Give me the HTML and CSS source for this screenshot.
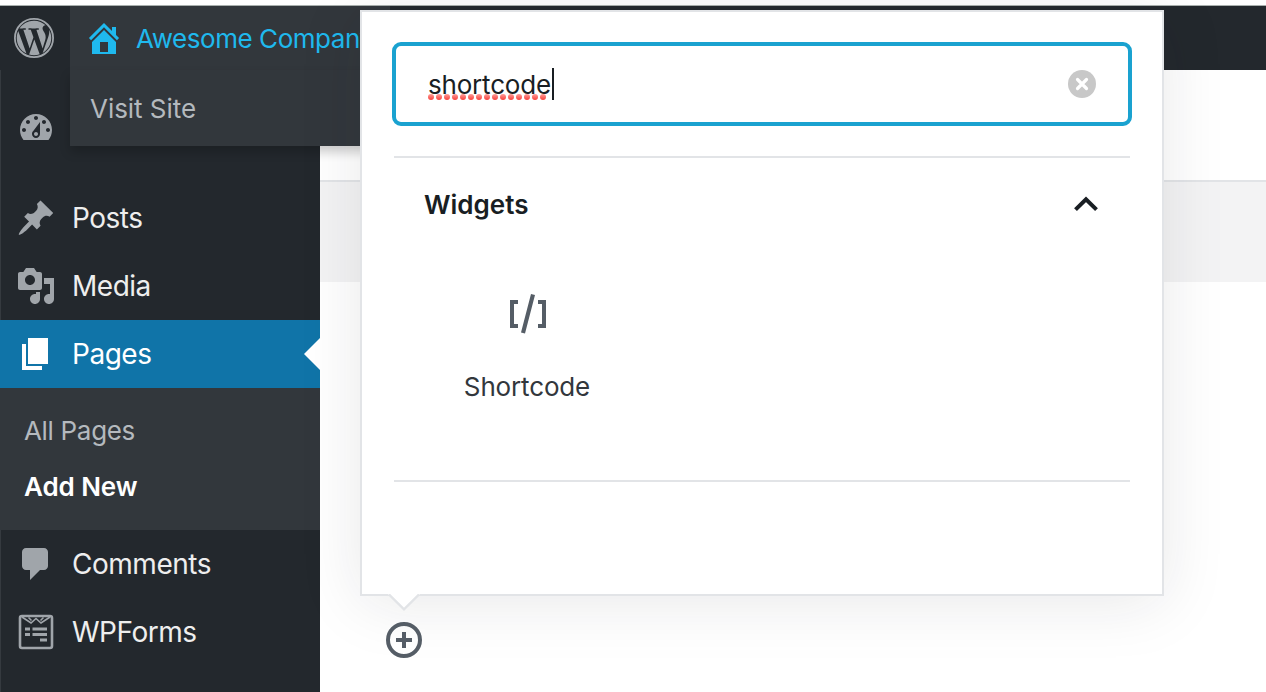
FILE: index.html
```html
<!DOCTYPE html>
<html lang="en">
<head>
<meta charset="utf-8">
<title>Add New Page</title>
<link rel="stylesheet" href="styles.css">
</head>
<body>
<div class="top-strip"></div>
<header class="adminbar">
  <a class="wp-logo">
    <svg width="40" height="40" viewBox="-20 -20 40 40"><circle r="19.1" fill="none" stroke="currentColor" stroke-width="1.8"/><path fill="currentColor" transform="scale(1.6) translate(-12 -12)" d="M21.469 6.825c.84 1.537 1.318 3.3 1.318 5.175 0 3.979-2.156 7.456-5.363 9.325l3.295-9.527c.615-1.54.82-2.771.82-3.864 0-.405-.026-.78-.07-1.11m-7.981.105c.647-.03 1.232-.105 1.232-.105.582-.075.514-.93-.067-.899 0 0-1.755.135-2.88.135-1.064 0-2.85-.15-2.85-.15-.585-.03-.661.855-.075.885 0 0 .54.061 1.125.09l1.68 4.605-2.37 7.08L5.354 6.9c.649-.03 1.234-.1 1.234-.1.585-.075.516-.93-.065-.896 0 0-1.746.138-2.874.138-.2 0-.438-.008-.69-.015C4.911 3.15 8.235 1.215 12 1.215c2.809 0 5.365 1.072 7.286 2.833-.046-.003-.091-.009-.141-.009-1.06 0-1.812.923-1.812 1.914 0 .89.513 1.643 1.06 2.531.411.72.89 1.643.89 2.977 0 .915-.354 1.994-.821 3.479l-1.075 3.585-3.9-11.61zM12 22.784c-1.059 0-2.081-.153-3.048-.437l3.237-9.406 3.315 9.087c.024.053.05.101.078.149-1.12.393-2.325.609-3.582.609M1.211 12c0-1.564.336-3.05.935-4.39L7.29 21.709C3.694 19.96 1.212 16.271 1.211 12"/></svg>
  </a>
  <div class="site">
    <a class="site-name">
      <svg width="40" height="40" viewBox="0 0 20 20"><path fill="currentColor" d="M16 8.5l1.53 1.53-1.06 1.06L10 4.6l-6.47 6.49-1.06-1.06L10 2.5l4 4v-2h2v4zm-6-2.46l6 5.99V18H4v-5.97zM12 17v-5H8v5h4z"/></svg>
      <span class="site-label">Awesome Company</span>
    </a>
    <div class="site-menu"><a class="visit">Visit Site</a></div>
  </div>
</header>
<div class="body">
  <nav class="sidebar">
    <a class="item dashboard">
      <svg class="icon" viewBox="0 0 20 20"><path d="M3.76 16h12.48c1.1-1.37 1.76-3.11 1.76-5 0-4.42-3.58-8-8-8s-8 3.58-8 8c0 1.89.66 3.63 1.76 5zM10 4c.55 0 1 .45 1 1s-.45 1-1 1-1-.45-1-1 .45-1 1-1zM6 6c.55 0 1 .45 1 1s-.45 1-1 1-1-.45-1-1 .45-1 1-1zm8 0c.55 0 1 .45 1 1s-.45 1-1 1-1-.45-1-1 .45-1 1-1zm-5.37 5.55L12 7v6c0 1.1-.9 2-2 2s-2-.9-2-2c0-.57.24-1.08.63-1.45zM4 10c.55 0 1 .45 1 1s-.45 1-1 1-1-.45-1-1 .45-1 1-1zm12 0c.55 0 1 .45 1 1s-.45 1-1 1-1-.45-1-1 .45-1 1-1zm-5 3c0-.55-.45-1-1-1s-1 .45-1 1 .45 1 1 1 1-.45 1-1z"/></svg>
    </a>
    <a class="item posts">
      <svg class="icon" viewBox="0 0 20 20"><path d="M10.44 3.02l1.82-1.82 6.36 6.35-1.83 1.82c-1.05-.68-2.48-.57-3.41.36l-.75.75c-.92.93-1.04 2.35-.35 3.41l-1.83 1.82-2.41-2.41-2.8 2.79c-.42.42-3.38 2.71-3.8 2.29s1.86-3.39 2.28-3.81l2.79-2.79L4.1 9.36l1.83-1.82c1.05.69 2.48.57 3.4-.36l.75-.75c.93-.92 1.05-2.35.36-3.41z"/></svg>
      <span class="label">Posts</span>
    </a>
    <a class="item media">
      <svg class="icon" viewBox="0 0 20 20"><path d="M13 11V4c0-.55-.45-1-1-1h-1.67L9 1H5L3.67 3H2c-.55 0-1 .45-1 1v7c0 .55.45 1 1 1h10c.55 0 1-.45 1-1zM7 4.5c1.38 0 2.5 1.12 2.5 2.5S8.38 9.5 7 9.5 4.5 8.38 4.5 7 5.62 4.5 7 4.5zM14 6h5v10.5c0 1.38-1.12 2.5-2.5 2.5S14 17.88 14 16.5s1.12-2.5 2.5-2.5c.17 0 .34.02.5.05V9h-3V6zm-4 8.05V13h2v3.5c0 1.38-1.12 2.5-2.5 2.5S7 17.88 7 16.5 8.12 14 9.5 14c.17 0 .34.02.5.05z"/></svg>
      <span class="label">Media</span>
    </a>
    <a class="item pages current">
      <svg class="icon" viewBox="0 0 20 20"><path d="M6 15V2h10v13H6zm-1 1h8v2H3V5h2v11z"/></svg>
      <span class="label">Pages</span>
    </a>
    <div class="submenu">
      <a class="sub all">All Pages</a>
      <a class="sub active">Add New</a>
    </div>
    <a class="item comments">
      <svg class="icon" viewBox="0 0 20 20"><path d="M5 2h9c1.1 0 2 .9 2 2v7c0 1.1-.9 2-2 2h-2l-5 5v-5H5c-1.1 0-2-.9-2-2V4c0-1.1.9-2 2-2z"/></svg>
      <span class="label">Comments</span>
    </a>
    <a class="item wpforms">
      <svg class="icon" viewBox="0 0 40 40"><rect x="4" y="4" width="32" height="32" rx="2" fill="none" stroke="#a0a5aa" stroke-width="2.6"/><path fill="none" stroke="#a0a5aa" stroke-width="1.6" d="M6 5l9 6 5-4.500 5 4.500 9-6M12.500 5.500l3 3M27.500 5.500l-3 3"/><path d="M9 15.500h5v3H9zM16.500 15.500H31v3H16.500zM9 21h5v3H9zM16.500 21H31v3H16.500zM24 26.500h7v3h-7z"/></svg>
      <span class="label">WPForms</span>
    </a>
  </nav>
  <main class="editor">
    <div class="editor-header"></div>
    <div class="editor-notice"></div>
  </main>
</div>

<section class="inserter">
  <div class="search">
    <span class="query">shortcode<svg class="spelling" width="120" height="6" viewBox="0 0 120 6"><defs><linearGradient id="dot" x1="0" y1="0" x2="0" y2="1"><stop offset="0" stop-color="#ff9d98"/><stop offset="1" stop-color="#f8403b"/></linearGradient><pattern id="dots" width="8" height="6" patternUnits="userSpaceOnUse"><circle cx="3" cy="3" r="3" fill="url(#dot)"/></pattern></defs><rect width="120" height="6" fill="url(#dots)"/></svg></span><i class="caret"></i>
    <svg class="clear" width="28" height="28" viewBox="0 0 28 28"><circle cx="14" cy="14" r="14" fill="#c8c8c8"/><path d="M9.500 9.500l9 9M18.500 9.500l-9 9" stroke="#fff" stroke-width="3.200" stroke-linecap="round"/></svg>
  </div>
  <div class="panel">
    <div class="panel-head">
      <h2 class="panel-title">Widgets</h2>
      <svg class="chevron" width="24" height="16" viewBox="0 0 24 16"><path d="M1.500 13.700L12 3.300l10.500 10.400" fill="none" stroke="#191e23" stroke-width="4"/></svg>
    </div>
    <div class="block">
      <svg class="block-icon" width="38" height="40" viewBox="0 0 38 40"><path fill="#555d66" d="M1 6h8v4H5v20h4v4H1zM29 6h8v28h-8v-4h4V10h-4zM22 0l4 1L16 39.500l-4-1z"/></svg>
      <span class="block-name">Shortcode</span>
    </div>
  </div>
  <svg class="pointer" width="32" height="17" viewBox="0 0 32 17"><path d="M0 0h32L16 16z" fill="#fff"/><path d="M1 .500L16 15.300 31 .500" fill="none" stroke="#e2e4e7" stroke-width="2.400"/></svg>
  <svg class="add" width="36" height="36" viewBox="0 0 36 36"><circle cx="18" cy="18" r="16" fill="none" stroke="#555d66" stroke-width="4"/><path d="M10 18h16M18 10v16" stroke="#555d66" stroke-width="4"/></svg>
</section>
</body>
</html>
```
FILE: styles.css
```css
* { box-sizing: border-box; }
body {
  margin: 0;
  width: 1266px;
  height: 692px;
  overflow: hidden;
  position: relative;
  display: flex;
  flex-direction: column;
  background: #fff;
  font-family: Inter, "Liberation Sans", sans-serif;
}
svg { display: block; flex: none; }
.top-strip { height: 6px; flex: none; border-bottom: 1px solid #a9b0ae; }
.adminbar { height: 64px; flex: none; display: flex; background: #23282d; }
.wp-logo { width: 70px; padding: 12px 0 0 14px; color: #a0a5aa; }
.site { width: 320px; position: relative; z-index: 2; background: #32373c; }
.site-name { height: 64px; padding: 12px 0 0 14px; display: flex; gap: 12px; color: #1fb9ee; }
.site-label { font-size: 26px; line-height: 42px; white-space: nowrap; letter-spacing: -.45px; font-weight: 430; }
.site-menu {
  position: absolute;
  top: 64px;
  left: 0;
  width: 320px;
  height: 76px;
  padding: 18px 20px;
  background: #32373c;
  box-shadow: 0 6px 10px rgba(0, 0, 0, .2);
}
.visit { font-size: 26px; line-height: 42px; color: #b4b9be; display: block; font-weight: 430; letter-spacing: -.04px; }
.body { flex: 1; display: flex; min-height: 0; }
.sidebar { width: 320px; padding-top: 24px; background: #23282d; box-shadow: inset 1px 0 #353a3f; }
.item { height: 68px; padding: 14px 0 0 16px; display: flex; gap: 16px; color: #eee; }
.dashboard { margin-bottom: 22px; }
.icon { width: 40px; height: 40px; fill: #a0a5aa; }
.label { font-size: 28px; line-height: 41px; letter-spacing: -.48px; font-weight: 430; }
.current { background: #1074a8; color: #fff; position: relative; }
.current .icon { fill: #fff; }
.current::after {
  content: "";
  position: absolute;
  right: 0;
  top: 18px;
  border: solid transparent;
  border-width: 16px 16px 16px 0;
  border-right-color: #fff;
}
.submenu { height: 142px; padding: 15px 24px; background: #32373c; }
.sub { display: block; font-size: 26px; line-height: 56px; color: #b4b9be; font-weight: 430; letter-spacing: -.32px; }
.sub.active { color: #fff; font-weight: 600; letter-spacing: -.08px; }
.editor { flex: 1; }
.editor-header { height: 112px; border-bottom: 2px solid #e2e4e7; }
.editor-notice { height: 100px; background: #f3f3f4; }

.inserter {
  position: absolute;
  z-index: 5;
  left: 360px;
  top: 10px;
  width: 804px;
  height: 586px;
  padding: 30px 30px 0;
  background: #fff;
  border: 2px solid #e2e4e7;
  box-shadow: 0 6px 60px rgba(25, 30, 35, .1);
}
.search {
  height: 84px;
  padding: 0 32px;
  display: flex;
  align-items: center;
  border: 4px solid #1aa2d0;
  border-radius: 9px;
}
.query { position: relative; font-size: 26px; line-height: 36px; padding-top: 2px; letter-spacing: -.2px; color: #191e23; }
.spelling { position: absolute; left: 0; top: 29px; }
.caret { width: 2px; height: 32px; background: #191e23; margin-left: 1px; }
.clear { margin-left: auto; }
.panel { height: 326px; margin: 30px 2px 0; border: solid #e2e4e7; border-width: 2px 0; }
.panel-head { display: flex; justify-content: space-between; align-items: center; height: 92px; padding: 2px 32px 0 30px; }
.panel-title { margin: 0; font-size: 26px; line-height: 40px; font-weight: 600; color: #191e23; }
.chevron { margin-bottom: 3px; }
.block { width: 204px; margin-left: 31px; padding-top: 44px; display: flex; flex-direction: column; align-items: center; }
.block-icon { margin-left: 2px; }
.block-name { margin-top: 34px; font-size: 26px; line-height: 38px; letter-spacing: -.15px; color: #32373c; }
.pointer { position: absolute; left: 26px; top: 582px; }
.add { position: absolute; left: 24px; top: 610px; }
```
